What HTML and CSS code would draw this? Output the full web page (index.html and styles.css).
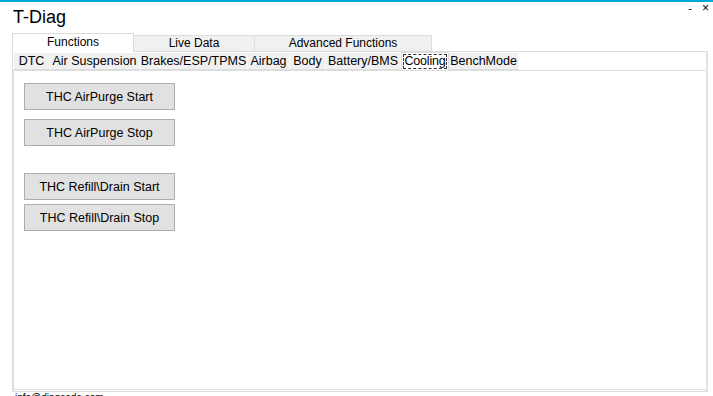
FILE: index.html
```html
<!DOCTYPE html>
<html>
<head>
<meta charset="utf-8">
<link rel="stylesheet" href="styles.css">
</head>
<body>
<div class="window">
  <header class="titlebar">
    <div class="title">T-Diag</div>
    <div class="controls"><span class="min">-</span><span class="close">×</span></div>
  </header>
  <nav class="tabs">
    <div class="tab active t1">Functions</div>
    <div class="tab t2">Live Data</div>
    <div class="tab t3">Advanced Functions</div>
  </nav>
  <section class="page">
    <nav class="subtabs">
      <div class="sub s-dtc">DTC</div>
      <div class="sub s-air">Air Suspension</div>
      <div class="sub s-brk">Brakes/ESP/TPMS</div>
      <div class="sub s-bag">Airbag</div>
      <div class="sub s-body">Body</div>
      <div class="sub s-bms">Battery/BMS</div>
      <div class="sub s-cool active"><span class="focus">Cooling</span></div>
      <div class="sub s-bench">BenchMode</div>
    </nav>
    <div class="subpage">
      <button class="btn b1">THC AirPurge Start</button>
      <button class="btn b2">THC AirPurge Stop</button>
      <button class="btn b3">THC Refill\Drain Start</button>
      <button class="btn b4">THC Refill\Drain Stop</button>
    </div>
  </section>
  <footer class="footer">info@dingcode.com</footer>
</div>
</body>
</html>
```
FILE: styles.css
```css
html, body {
  margin: 0;
  padding: 0;
  background: #ffffff;
  overflow: hidden;
}
.window {
  width: 713px;
  height: 396px;
  box-sizing: border-box;
  border-top: 2px solid #00a8d8;
  font-family: "Liberation Sans", Arial, sans-serif;
  color: #000;
  display: flex;
  flex-direction: column;
  overflow: hidden;
}
.window > * { flex-shrink: 0; }
.titlebar {
  height: 31px;
  display: flex;
  justify-content: space-between;
  align-items: flex-start;
}
.title {
  font-size: 18px;
  margin: 5px 0 0 13px;
  line-height: 20px;
}
.controls {
  display: flex;
  gap: 10px;
  font-size: 11px;
  line-height: 11px;
  margin: 1px 4px 0 0;
}
.controls .close { font-size: 12px; }
.tabs {
  display: flex;
  align-items: flex-end;
  margin-left: 12px;
  height: 18px;
  position: relative;
  z-index: 1;
}
.tab {
  box-sizing: border-box;
  height: 16px;
  background: #f0f0f0;
  border: 1px solid #dcdcdc;
  border-bottom: none;
  font-size: 12px;
  line-height: 14px;
  text-align: center;
}
.tab + .tab { border-left: none; }
.tab.active {
  height: 19px;
  background: #fff;
  line-height: 16px;
  margin-bottom: -1px;
}
.t1 { width: 122px; }
.t2 { width: 121px; }
.t3 { width: 177px; }
.page {
  margin: 0 5px 0 12px;
  height: 341px;
  box-sizing: border-box;
  border: 1px solid #dcdcdc;
  border-right: 2px solid #e3e3e3;
  display: flex;
  flex-direction: column;
}
.subtabs {
  display: flex;
  align-items: flex-end;
  height: 18px;
  padding-left: 1px;
  position: relative;
  z-index: 1;
}
.sub {
  box-sizing: border-box;
  height: 17px;
  background: #f0f0f0;
  border-right: 1px solid #fafafa;
  border-bottom: 1px solid #dcdcdc;
  font-size: 12.5px;
  line-height: 17px;
  text-align: center;
  white-space: nowrap;
}
.s-dtc { width: 36px; }
.s-air { width: 90px; }
.s-brk { width: 108px; }
.s-bag { width: 42px; }
.s-body { width: 36px; }
.s-bms { width: 75px; }
.s-cool { width: 48px; }
.s-bench { width: 70px; }
.sub.active {
  height: 18px;
  background: #fff;
  border: 1px solid #dcdcdc;
  border-bottom: none;
  padding: 1px 1px 0;
  line-height: 14px;
}
.focus {
  display: block;
  border: 1px dashed #333;
  height: 15px;
  box-sizing: border-box;
  line-height: 13px;
  letter-spacing: -0.2px;
}
.subpage {
  flex: 1;
  margin: 0 0 1px 0;
  border: 1px solid #dcdcdc;
  border-right: none;
  background: #fff;
  display: flex;
  flex-direction: column;
  align-items: flex-start;
  padding: 12px 0 0 10px;
}
.btn {
  width: 151px;
  height: 27px;
  background: #e1e1e1;
  border: 1px solid #adadad;
  font-family: "Liberation Sans", Arial, sans-serif;
  font-size: 12.5px;
  color: #000;
  padding: 0;
  margin: 0;
}
.b2 { margin-top: 9px; }
.b3 { margin-top: 27px; }
.b4 { margin-top: 4px; }
.footer {
  font-size: 10px;
  margin-left: 15px;
  line-height: 12px;
  color: #000;
}
```
